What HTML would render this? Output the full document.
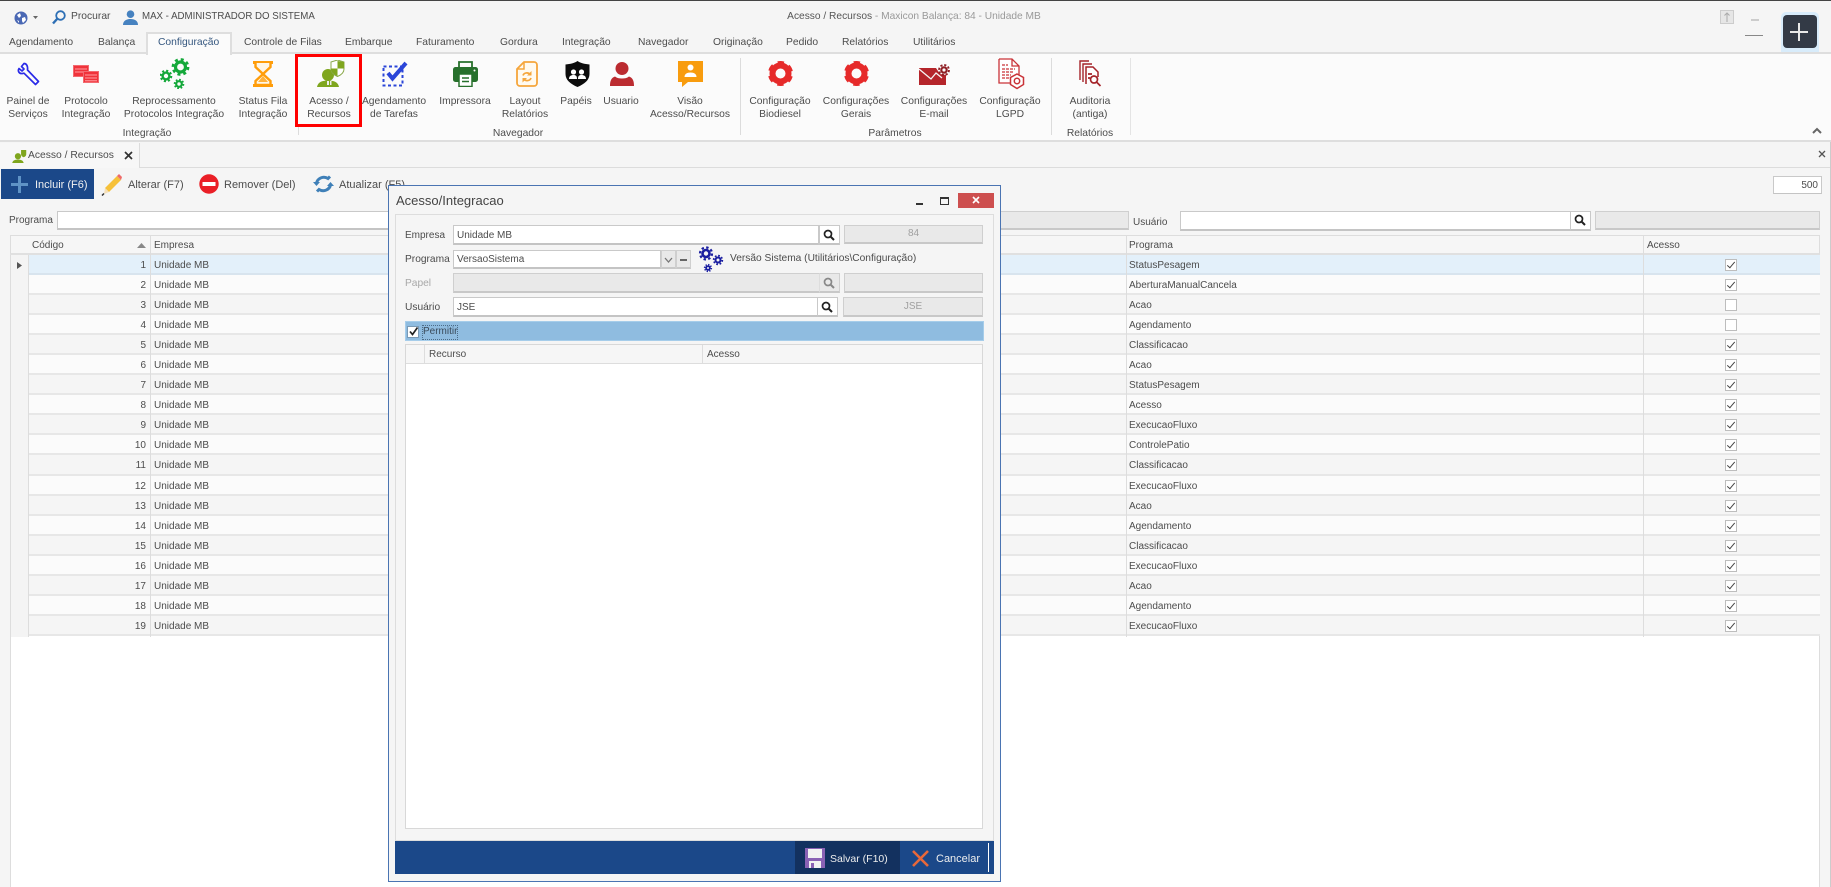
<!DOCTYPE html>
<html lang="pt-BR"><head><meta charset="utf-8"><title>Acesso / Recursos</title>
<style>
html,body{margin:0;padding:0;width:1831px;height:887px;overflow:hidden;background:#f5f5f5}
#a{position:relative;width:1831px;height:887px;overflow:hidden;background:#f5f5f5;font:10.3px/14px "Liberation Sans",sans-serif;color:#4c4c4c;filter:blur(.3px)}
.t,.c,.b,svg{position:absolute}
.t,.c{white-space:nowrap}
.c{transform:translateX(-50%);text-align:center}
.i{background:#fff;border:1px solid #c9c9c9;border-bottom:2px solid #c4c4c4;box-sizing:border-box}
.g{background:#e9e9e9;border:1px solid #cfcfcf;border-bottom:2px solid #c8c8c8;box-sizing:border-box}
.s{width:1px;background:#dcdcdc;top:58px;height:77px}
.r{position:relative;height:20.05px;box-sizing:border-box;border-bottom:2px solid #e7e7e7;background:#fbfbfb;font-size:10px;line-height:18px}
.r:nth-child(odd){background:#f5f5f5}
.r.sel{background:#e3f0fa;border-bottom-color:#d8e4ee}
.r b{position:absolute;font-weight:400;white-space:nowrap;top:2px}
.r .k{position:absolute;left:1697px;top:4px;width:12px;height:12px;box-sizing:border-box;background:#fff;border:1px solid #bdbdbd}
.r .k.on:after{content:"";position:absolute;left:3px;top:0;width:3px;height:7px;border:solid #444;border-width:0 1.6px 1.6px 0;transform:rotate(40deg)}
.r .a{left:0;width:118px;text-align:right}
.r .e{left:126px}
.r .p{left:1101px}
.l{line-height:13px;top:95px}
.h{top:239px;font-size:10px}
.d{font-size:10.2px}
</style></head><body><div id="a">

<!-- title bar -->
<div class="b" style="left:0;top:0;width:1831px;height:1px;background:#444"></div>
<svg style="left:14px;top:11px" width="14" height="14" viewBox="0 0 14 14"><circle cx="7" cy="7" r="6.5" fill="#4a68b4"/><path d="M3 4l3-2 1 3-2 2zM8 7l3-1 1 3-3 3-1-2zM3 9l2 1 0 2z" fill="#fff"/></svg>
<svg style="left:33px;top:16px" width="5" height="4" viewBox="0 0 5 4"><path d="M0 0h5L2.5 3z" fill="#666"/></svg>
<svg style="left:52px;top:10px" width="14" height="15" viewBox="0 0 14 15"><circle cx="8.5" cy="5.5" r="4.3" fill="none" stroke="#2d6fb5" stroke-width="1.8"/><path d="M5.5 8.5L1 13.5" stroke="#2d6fb5" stroke-width="2.4"/></svg>
<div class="t" style="left:71px;top:10px">Procurar</div>
<svg style="left:123px;top:10px" width="15" height="15" viewBox="0 0 15 15"><circle cx="7.5" cy="4.2" r="3.8" fill="#4682c0"/><path d="M0 15c0-4 3-6 7.5-6S15 11 15 15z" fill="#4682c0"/></svg>
<div class="t" style="left:142px;top:10px;font-size:9.7px">MAX - ADMINISTRADOR DO SISTEMA</div>
<div class="c" style="left:914px;top:10px;font-size:10.2px;color:#999"><span style="color:#555">Acesso / Recursos</span> - Maxicon Balança: 84 - Unidade MB</div>

<svg style="left:1720px;top:10px" width="14" height="14" viewBox="0 0 14 14"><rect x=".5" y=".5" width="13" height="13" fill="#e6e6e6" stroke="#ccc"/><path d="M7 12V3M4.5 5.5L7 3l2.500 2.500" stroke="#aaa" fill="none"/></svg>
<div class="b" style="left:1751px;top:19px;width:8px;height:2px;background:#ccc"></div>
<div class="b" style="left:1745px;top:35px;width:18px;height:1px;background:#888"></div>
<div class="b" style="left:1781px;top:12px;width:38px;height:45px;border-radius:5px;background:#d8ecfb"></div>
<div class="b" style="left:1783px;top:15px;width:34px;height:33px;border-radius:4px;background:#333a46"></div>
<div class="b" style="left:1790px;top:31px;width:18px;height:2px;background:#e8e8e8"></div>
<div class="b" style="left:1798px;top:23px;width:2px;height:18px;background:#e8e8e8"></div>

<!-- tabs -->
<div class="b" style="left:0;top:52px;width:1831px;height:88px;background:#fbfbfb;border-top:2px solid #dedede;box-sizing:border-box"></div>
<div class="b" style="left:146px;top:32px;width:86px;height:23px;background:#fbfbfb;border:2px solid #dedede;border-bottom:0;box-sizing:border-box"></div>
<div class="t" style="left:9px;top:36px">Agendamento</div>
<div class="t" style="left:98px;top:36px">Balança</div>
<div class="t" style="left:158px;top:36px;color:#35577f">Configuração</div>
<div class="t" style="left:244px;top:36px">Controle de Filas</div>
<div class="t" style="left:345px;top:36px">Embarque</div>
<div class="t" style="left:416px;top:36px">Faturamento</div>
<div class="t" style="left:500px;top:36px">Gordura</div>
<div class="t" style="left:562px;top:36px">Integração</div>
<div class="t" style="left:638px;top:36px">Navegador</div>
<div class="t" style="left:713px;top:36px">Originação</div>
<div class="t" style="left:786px;top:36px">Pedido</div>
<div class="t" style="left:842px;top:36px">Relatórios</div>
<div class="t" style="left:913px;top:36px">Utilitários</div>

<!-- ribbon icons -->
<svg style="left:16px;top:62px" width="24" height="24" viewBox="0 0 24 24"><path d="M8 1.500L5.500 4.500l2.500 2.500-2 2-3-2.500C1.500 9 3 12 6.500 11.500l1.500-.3L19.500 22.500l3-3L11.500 8C12 4 10.500 1.500 8 1.500z" fill="#fbfbfb" stroke="#2a2ae8" stroke-width="1.700" stroke-linejoin="round"/></svg>
<svg style="left:73px;top:65px" width="26" height="18" viewBox="0 0 26 18"><rect x=".5" y=".5" width="15" height="11" fill="#f0333b" stroke="#f26a70"/><rect x="10.500" y="6.500" width="15" height="11" fill="#f0333b" stroke="#f26a70"/><path d="M2 4h12M2 7h8M12 10h12M12 13h12M12 15.700h12" stroke="#ff9da1" stroke-width="1"/></svg>
<svg style="left:160px;top:58px" width="30" height="31" viewBox="0 0 30 31"><g fill="none" stroke="#14a83a"><circle cx="20.500" cy="9" r="5" stroke-width="3.200"/><circle cx="20.500" cy="9" r="7.600" stroke-width="2.600" stroke-dasharray="3 2.970"/><circle cx="6" cy="18" r="3.400" stroke-width="2.400"/><circle cx="6" cy="18" r="5.300" stroke-width="2" stroke-dasharray="2.100 2.060"/><circle cx="19" cy="26" r="2.800" stroke-width="2.200"/><circle cx="19" cy="26" r="4.400" stroke-width="1.800" stroke-dasharray="1.700 1.750"/></g></svg>
<svg style="left:252px;top:61px" width="22" height="26" viewBox="0 0 22 26"><path d="M1 1.500h20M1 24.500h20" stroke="#ff9d0a" stroke-width="3"/><path d="M3.500 2v4l7.500 7-7.500 7v4h15v-4L11 13l7.500-7V2" fill="#fff6e6" stroke="#ff9d0a" stroke-width="2.400"/><path d="M11 15l-5 6h10z" fill="#ffb23c"/></svg>
<svg style="left:317px;top:60px" width="28" height="27" viewBox="0 0 28 27"><circle cx="11" cy="15" r="6" fill="#7fa61e"/><path d="M0 27c1-5 5-6.500 11-6.500S21 22 22 27z" fill="#7fa61e"/><path d="M10 21h2v4h-2zM13 21h1.500v4H13z" fill="#eee"/><path d="M14 2l6.500-2L27 2v7c0 3.500-3 6-6.500 7.500C17 15 14 12.500 14 9z" fill="#fff" stroke="#8aa94a" stroke-width="1"/><path d="M20.500 1v7.500H14v.5c0 3 3 5.500 6.500 7V8.500H27V2z" fill="#7fa61e"/></svg>
<svg style="left:382px;top:61px" width="26" height="26" viewBox="0 0 26 26"><rect x="1.500" y="5.500" width="19" height="19" fill="none" stroke="#2b46d8" stroke-width="2" stroke-dasharray="3 2.500"/><path d="M6 12l4.500 5.500L24 2" fill="none" stroke="#2b46d8" stroke-width="4"/></svg>
<svg style="left:453px;top:61px" width="25" height="26" viewBox="0 0 25 26"><path d="M6 6V1h13v5" fill="none" stroke="#27702c" stroke-width="1.800"/><rect x="0" y="6" width="25" height="15" rx="2.500" fill="#27702c"/><rect x="6" y="13" width="13" height="12.500" fill="#fff" stroke="#27702c" stroke-width="1.500"/><path d="M9 17h7M9 20.500h7" stroke="#27702c" stroke-width="1.500"/><circle cx="21.500" cy="9.500" r="1" fill="#fff"/></svg>
<svg style="left:516px;top:61px" width="22" height="26" viewBox="0 0 22 26"><path d="M8 1H18c1.700 0 3 1.300 3 3v18c0 1.700-1.300 3-3 3H4c-1.700 0-3-1.300-3-3V8z" fill="#fffaf0" stroke="#f5a63c" stroke-width="1.800" stroke-linejoin="round"/><path d="M8 1v7H1" fill="none" stroke="#f5a63c" stroke-width="1.500"/><path d="M7 14.500c1-3 5-3.500 7.500-1M15 17c-1 3-5 3.500-7.500 1" fill="none" stroke="#f5a63c" stroke-width="1.700"/><path d="M15.500 10v4.500H11zM6.500 21.500V17H11z" fill="#f5a63c"/></svg>
<svg style="left:565px;top:61px" width="25" height="26" viewBox="0 0 25 26"><path d="M12.500 0c3 2 7 3 12 3.500V13c0 6-5 10-12 13C5.500 23 .5 19 .5 13V3.500C5.500 3 9.500 2 12.500 0z" fill="#0c0c0c"/><circle cx="8.500" cy="11" r="2.600" fill="#fff"/><circle cx="16.500" cy="11" r="2.600" fill="#fff"/><path d="M4 18c0-3 2-4 4.500-4s3.500 1 3.500 4zM13 18c0-3 1-4 3.500-4s4.500 1 4.500 4z" fill="#fff"/></svg>
<svg style="left:610px;top:62px" width="24" height="24" viewBox="0 0 24 24"><circle cx="12" cy="6.500" r="6.500" fill="#bb2b30"/><path d="M0 24c0-5 1-8 5-9.500 2 1.500 4 2 7 2s5-.5 7-2c4 1.500 5 4.500 5 9.500z" fill="#bb2b30"/></svg>
<svg style="left:678px;top:61px" width="25" height="26" viewBox="0 0 25 26"><path d="M0 0h25v21H10l-6 5v-5H0z" fill="#f89c0e"/><circle cx="12.500" cy="6.500" r="3" fill="#fff"/><path d="M6.500 16c0-3 2.500-4.500 6-4.500s6 1.500 6 4.500z" fill="#fff"/></svg>
<svg style="left:768px;top:61px" width="25" height="25" viewBox="0 0 25 25"><g fill="none" stroke="#e62a2a"><circle cx="12.500" cy="12.500" r="8" stroke-width="6"/><circle cx="12.500" cy="12.500" r="10.500" stroke-width="4" stroke-dasharray="6 5" transform="rotate(13.6 12.500 12.500)"/></g></svg>
<svg style="left:844px;top:61px" width="25" height="25" viewBox="0 0 25 25"><g fill="none" stroke="#e62a2a"><circle cx="12.500" cy="12.500" r="8" stroke-width="6"/><circle cx="12.500" cy="12.500" r="10.500" stroke-width="4" stroke-dasharray="6 5" transform="rotate(13.6 12.500 12.500)"/></g></svg>
<svg style="left:919px;top:64px" width="32" height="21" viewBox="0 0 32 21"><path d="M0 4h17l4 6 6 1v10H0z" fill="#b5252b"/><path d="M0 5l12 10 5-6 6 5" fill="none" stroke="#f5f5f5" stroke-width="1.300"/><g fill="none" stroke="#8f1f24"><circle cx="25" cy="6" r="2.700" stroke-width="2.200"/><circle cx="25" cy="6" r="5" stroke-width="1.800" stroke-dasharray="2.200 1.730"/></g></svg>
<svg style="left:998px;top:58px" width="27" height="32" viewBox="0 0 27 32"><path d="M1 1h13l7 7v14M14 1v7h7M14 25H1V1" fill="#fff" stroke="#c93338" stroke-width="1.300"/><path d="M4 7h6M4 11h13M4 14h11M4 17h9M4 20h7" stroke="#c93338" stroke-width="1.300" stroke-dasharray="3 1"/><path d="M19 16l6.500 3.500v7L19 30.500l-6.500-4v-7z" fill="#fff" stroke="#c93338" stroke-width="1.500"/><circle cx="19" cy="23" r="2.700" fill="none" stroke="#c93338" stroke-width="1.500"/></svg>
<svg style="left:1079px;top:60px" width="23" height="27" viewBox="0 0 23 27"><path d="M1 20V1h9M4 22V4h9" fill="none" stroke="#a5242a" stroke-width="1.400"/><path d="M7 24V7h7l5 5v5" fill="#fff" stroke="#a5242a" stroke-width="1.500"/><circle cx="15" cy="19.500" r="3.500" fill="#fff" stroke="#a5242a" stroke-width="1.700"/><path d="M17.500 22l4 4M9 14h4M9 18h2" stroke="#a5242a" stroke-width="1.700"/></svg>

<!-- ribbon labels -->
<div class="c l" style="left:28px">Painel de<br>Serviços</div>
<div class="c l" style="left:86px">Protocolo<br>Integração</div>
<div class="c l" style="left:174px">Reprocessamento<br>Protocolos Integração</div>
<div class="c l" style="left:263px">Status Fila<br>Integração</div>
<div class="c l" style="left:329px">Acesso /<br>Recursos</div>
<div class="c l" style="left:394px">Agendamento<br>de Tarefas</div>
<div class="c l" style="left:465px">Impressora</div>
<div class="c l" style="left:525px">Layout<br>Relatórios</div>
<div class="c l" style="left:576px">Papéis</div>
<div class="c l" style="left:621px">Usuario</div>
<div class="c l" style="left:690px">Visão<br>Acesso/Recursos</div>
<div class="c l" style="left:780px">Configuração<br>Biodiesel</div>
<div class="c l" style="left:856px">Configurações<br>Gerais</div>
<div class="c l" style="left:934px">Configurações<br>E-mail</div>
<div class="c l" style="left:1010px">Configuração<br>LGPD</div>
<div class="c l" style="left:1090px">Auditoria<br>(antiga)</div>
<div class="c" style="left:147px;top:127px">Integração</div>
<div class="c" style="left:518px;top:127px">Navegador</div>
<div class="c" style="left:895px;top:127px">Parâmetros</div>
<div class="c" style="left:1090px;top:127px">Relatórios</div>
<div class="b s" style="left:298px;top:127px;height:8px"></div>
<div class="b s" style="left:740px"></div>
<div class="b s" style="left:1051px"></div>
<div class="b s" style="left:1130px;background:#e4e4e4"></div>
<div class="b" style="left:295px;top:54px;width:67px;height:73px;border:3px solid #f00;box-sizing:border-box"></div>
<svg style="left:1812px;top:127px" width="10" height="7" viewBox="0 0 10 7"><path d="M1 6l4-4 4 4" fill="none" stroke="#666" stroke-width="2"/></svg>
<div class="b" style="left:0;top:140px;width:1831px;height:2px;background:#dedede"></div>

<!-- document tab -->
<div class="b" style="left:0;top:167px;width:1831px;height:1px;background:#dcdcdc"></div>
<div class="b" style="left:0;top:143px;width:140px;height:25px;background:#f7f7f7;border-right:1px solid #dcdcdc;box-sizing:border-box"></div>
<svg style="left:11px;top:149px" width="17" height="14" viewBox="0 0 28 27"><circle cx="11" cy="14" r="6" fill="#7fa61e"/><path d="M0 27c1-5 5-6.500 11-6.500S21 22 22 27z" fill="#7fa61e"/><path d="M17 2h10v8c0 3-2 5-5 6-3-1-5-3-5-6z" fill="#7fa61e"/></svg>
<div class="t" style="left:28px;top:149px;font-size:10.3px">Acesso / Recursos</div>
<svg style="left:124px;top:151px" width="9" height="9" viewBox="0 0 9 9"><path d="M1 1l7 7M8 1L1 8" stroke="#333" stroke-width="1.700"/></svg>
<svg style="left:1818px;top:150px" width="8" height="8" viewBox="0 0 8 8"><path d="M1 1l6 6M7 1L1 7" stroke="#555" stroke-width="1.300"/></svg>

<!-- toolbar -->
<div class="b" style="left:1px;top:169px;width:93px;height:30px;background:#1b4889"></div>
<div class="b" style="left:11px;top:183px;width:17px;height:3px;background:#5f93c6"></div>
<div class="b" style="left:18px;top:176px;width:3px;height:17px;background:#5f93c6"></div>
<div class="t" style="left:35px;top:178px;font-size:11px;color:#f0f0f0">Incluir (F6)</div>
<svg style="left:101px;top:173px" width="22" height="23" viewBox="0 0 22 23"><path d="M4 15L16 3l4 4L8 19z" fill="#f6c13a"/><path d="M16 3l2-2 3 3-1 3z" fill="#ef6a6a"/><path d="M4 15l4 4-5 2z" fill="#f5dfb8"/><path d="M1 22.500l2-2" stroke="#333" stroke-width="1.500"/></svg>
<div class="t" style="left:128px;top:178px;font-size:11px">Alterar (F7)</div>
<svg style="left:199px;top:174px" width="20" height="20" viewBox="0 0 20 20"><circle cx="10" cy="10" r="9.700" fill="#ea1f27"/><rect x="3.500" y="8" width="13" height="4" fill="#fff"/></svg>
<div class="t" style="left:224px;top:178px;font-size:11px">Remover (Del)</div>
<svg style="left:313px;top:174px" width="21" height="20" viewBox="0 0 21 20"><path d="M3.500 9C4.500 4.500 10 1.500 15 4.500l2-2" fill="none" stroke="#3f80b8" stroke-width="3"/><path d="M17.500 11c-1 4.500-6.500 7.500-11.500 4.500l-2 2" fill="none" stroke="#3f80b8" stroke-width="3"/><path d="M0 8h7l-3.500 4zM21 12h-7l3.500-4z" fill="#3f80b8"/></svg>
<div class="t" style="left:339px;top:178px;font-size:11px">Atualizar (F5)</div>
<div class="b i" style="left:1773px;top:176px;width:49px;height:18px;font-size:10px;line-height:17px;text-align:right;padding-right:3px;border-bottom-width:1px">500</div>

<!-- filter row -->
<div class="t" style="left:9px;top:214px;font-size:10px">Programa</div>
<div class="b i" style="left:57px;top:211px;width:340px;height:19px"></div>
<div class="b g" style="left:1000px;top:211px;width:129px;height:19px;border-left:0"></div>
<div class="t" style="left:1133px;top:216px;font-size:10px">Usuário</div>
<div class="b i" style="left:1180px;top:211px;width:391px;height:20px"></div>
<div class="b i" style="left:1570px;top:211px;width:21px;height:20px"></div>
<svg style="left:1574px;top:214px" width="12" height="12" viewBox="0 0 12 12"><circle cx="5" cy="5" r="3.500" fill="none" stroke="#222" stroke-width="1.700"/><path d="M7.500 7.500L11 11" stroke="#222" stroke-width="2"/></svg>
<div class="b g" style="left:1595px;top:211px;width:225px;height:19px"></div>

<!-- main grid -->
<div class="b" style="left:10px;top:235px;width:1810px;height:652px;background:#fff;border-left:1px solid #ddd;border-right:1px solid #ddd;box-sizing:border-box"></div>
<div class="b" style="left:1830px;top:142px;width:1px;height:745px;background:#ccc"></div>
<div class="b" style="left:10px;top:235px;width:1810px;height:20px;background:#f6f6f6;border:1px solid #ddd;border-bottom:2px solid #e0e0e0;box-sizing:border-box"></div>
<div class="b" style="left:10px;top:255px;width:18px;height:382px;background:#f4f4f4;border-left:1px solid #ddd;box-sizing:border-box"></div>
<div class="t h" style="left:32px">Código</div>
<svg style="left:137px;top:243px" width="9" height="5" viewBox="0 0 9 5"><path d="M0 5h9L4.500 0z" fill="#888"/></svg>
<div class="t h" style="left:154px">Empresa</div>
<div class="t h" style="left:1129px">Programa</div>
<div class="t h" style="left:1647px">Acesso</div>
<svg style="left:17px;top:262px" width="5" height="7" viewBox="0 0 5 7"><path d="M0 0l5 3.500L0 7z" fill="#555"/></svg>

<div class="b" style="left:28px;top:255px;width:1792px">
<div class="r sel"><b class="a">1</b><b class="e">Unidade MB</b><b class="p">StatusPesagem</b><i class="k on"></i></div>
<div class="r"><b class="a">2</b><b class="e">Unidade MB</b><b class="p">AberturaManualCancela</b><i class="k on"></i></div>
<div class="r"><b class="a">3</b><b class="e">Unidade MB</b><b class="p">Acao</b><i class="k"></i></div>
<div class="r"><b class="a">4</b><b class="e">Unidade MB</b><b class="p">Agendamento</b><i class="k"></i></div>
<div class="r"><b class="a">5</b><b class="e">Unidade MB</b><b class="p">Classificacao</b><i class="k on"></i></div>
<div class="r"><b class="a">6</b><b class="e">Unidade MB</b><b class="p">Acao</b><i class="k on"></i></div>
<div class="r"><b class="a">7</b><b class="e">Unidade MB</b><b class="p">StatusPesagem</b><i class="k on"></i></div>
<div class="r"><b class="a">8</b><b class="e">Unidade MB</b><b class="p">Acesso</b><i class="k on"></i></div>
<div class="r"><b class="a">9</b><b class="e">Unidade MB</b><b class="p">ExecucaoFluxo</b><i class="k on"></i></div>
<div class="r"><b class="a">10</b><b class="e">Unidade MB</b><b class="p">ControlePatio</b><i class="k on"></i></div>
<div class="r"><b class="a">11</b><b class="e">Unidade MB</b><b class="p">Classificacao</b><i class="k on"></i></div>
<div class="r"><b class="a">12</b><b class="e">Unidade MB</b><b class="p">ExecucaoFluxo</b><i class="k on"></i></div>
<div class="r"><b class="a">13</b><b class="e">Unidade MB</b><b class="p">Acao</b><i class="k on"></i></div>
<div class="r"><b class="a">14</b><b class="e">Unidade MB</b><b class="p">Agendamento</b><i class="k on"></i></div>
<div class="r"><b class="a">15</b><b class="e">Unidade MB</b><b class="p">Classificacao</b><i class="k on"></i></div>
<div class="r"><b class="a">16</b><b class="e">Unidade MB</b><b class="p">ExecucaoFluxo</b><i class="k on"></i></div>
<div class="r"><b class="a">17</b><b class="e">Unidade MB</b><b class="p">Acao</b><i class="k on"></i></div>
<div class="r"><b class="a">18</b><b class="e">Unidade MB</b><b class="p">Agendamento</b><i class="k on"></i></div>
<div class="r"><b class="a">19</b><b class="e">Unidade MB</b><b class="p">ExecucaoFluxo</b><i class="k on"></i></div>
</div>
<div class="b" style="left:28px;top:255px;width:1px;height:382px;background:#ddd"></div>
<div class="b" style="left:150px;top:235px;width:1px;height:402px;background:#ddd"></div>
<div class="b" style="left:1126px;top:235px;width:1px;height:402px;background:#ddd"></div>
<div class="b" style="left:1643px;top:235px;width:1px;height:402px;background:#ddd"></div>

<!-- dialog -->
<div class="b" style="left:388px;top:185px;width:613px;height:697px;background:#f5f5f5;border:1px solid #4a74b2;box-sizing:border-box"></div>
<div class="t" style="left:396px;top:193px;font-size:13px;line-height:16px;color:#444">Acesso/Integracao</div>
<div class="b" style="left:916px;top:203px;width:7px;height:2px;background:#333"></div>
<div class="b" style="left:940px;top:197px;width:9px;height:8px;border:1px solid #333;border-top-width:2px;box-sizing:border-box"></div>
<div class="b" style="left:958px;top:193px;width:36px;height:15px;background:#cd4f4f"></div>
<svg style="left:972px;top:196px" width="8" height="8" viewBox="0 0 8 8"><path d="M1 1l6 6M7 1L1 7" stroke="#fff" stroke-width="1.600"/></svg>
<div class="b" style="left:395px;top:214px;width:599px;height:627px;border:1px solid #ddd;box-sizing:border-box"></div>

<div class="t d" style="left:405px;top:229px;font-size:10px">Empresa</div>
<div class="b i" style="left:453px;top:225px;width:366px;height:20px"></div>
<div class="t" style="left:457px;top:229px;font-size:10px">Unidade MB</div>
<div class="b i" style="left:819px;top:225px;width:21px;height:20px"></div>
<svg style="left:823px;top:229px" width="12" height="12" viewBox="0 0 12 12"><circle cx="5" cy="5" r="3.500" fill="none" stroke="#222" stroke-width="1.700"/><path d="M7.500 7.500L11 11" stroke="#222" stroke-width="2"/></svg>
<div class="b g" style="left:844px;top:225px;width:139px;height:19px;text-align:center;line-height:16px;color:#a0a0a0;font-size:10px">84</div>

<div class="t d" style="left:405px;top:253px">Programa</div>
<div class="b i" style="left:453px;top:250px;width:208px;height:19px"></div>
<div class="t" style="left:457px;top:253px;font-size:10px">VersaoSistema</div>
<div class="b g" style="left:661px;top:250px;width:15px;height:19px"></div>
<div class="b g" style="left:676px;top:250px;width:15px;height:19px"></div>
<svg style="left:664px;top:257px" width="9" height="6" viewBox="0 0 9 6"><path d="M1 1l3.500 4L8 1" fill="none" stroke="#777" stroke-width="1.300"/></svg>
<div class="b" style="left:680px;top:259px;width:7px;height:1.500px;background:#666"></div>
<svg style="left:698px;top:246px" width="26" height="27" viewBox="0 0 26 27"><g fill="none" stroke="#1a1ea0"><circle cx="8" cy="7.500" r="3.500" stroke-width="2.600"/><circle cx="8" cy="7.500" r="6" stroke-width="2.200" stroke-dasharray="2.400 2.310"/><circle cx="20" cy="14" r="2.500" stroke-width="2"/><circle cx="20" cy="14" r="4.300" stroke-width="1.800" stroke-dasharray="1.700 1.680"/><circle cx="10" cy="22" r="1.900" stroke-width="1.800"/><circle cx="10" cy="22" r="3.400" stroke-width="1.500" stroke-dasharray="1.300 1.370"/></g></svg>
<div class="t" style="left:730px;top:252px;font-size:10.2px">Versão Sistema (Utilitários\Configuração)</div>

<div class="t d" style="left:405px;top:277px;color:#a8a8a8">Papel</div>
<div class="b g" style="left:453px;top:273px;width:367px;height:20px"></div>
<div class="b g" style="left:819px;top:273px;width:21px;height:20px;border-left-color:#ddd"></div>
<svg style="left:823px;top:277px" width="12" height="12" viewBox="0 0 12 12"><circle cx="5" cy="5" r="3.500" fill="none" stroke="#888" stroke-width="1.700"/><path d="M7.500 7.500L11 11" stroke="#888" stroke-width="2"/></svg>
<div class="b g" style="left:844px;top:273px;width:139px;height:20px"></div>

<div class="t d" style="left:405px;top:301px">Usuário</div>
<div class="b i" style="left:453px;top:297px;width:365px;height:20px"></div>
<div class="t" style="left:457px;top:301px;font-size:10px">JSE</div>
<div class="b i" style="left:817px;top:297px;width:21px;height:20px"></div>
<svg style="left:821px;top:301px" width="12" height="12" viewBox="0 0 12 12"><circle cx="5" cy="5" r="3.500" fill="none" stroke="#222" stroke-width="1.700"/><path d="M7.500 7.500L11 11" stroke="#222" stroke-width="2"/></svg>
<div class="b g" style="left:843px;top:297px;width:140px;height:20px;text-align:center;line-height:18px;color:#a0a0a0;font-size:10px">JSE</div>

<div class="b" style="left:405px;top:321px;width:579px;height:20px;background:#8fbce0;border:1px solid #a6cdea;box-sizing:border-box"></div>
<div class="b" style="left:407px;top:326px;width:12px;height:12px;background:#fff;border:1px solid #7a9ab5;box-sizing:border-box"></div>
<svg style="left:408px;top:326px" width="11" height="11" viewBox="0 0 11 11"><path d="M2 5.500l2.500 3L9.500 1.500" fill="none" stroke="#222" stroke-width="1.700"/></svg>
<div class="t" style="left:422px;top:325px;height:15px;font-size:10px;padding:0 1px;outline:1px dotted #4c6c88;outline-offset:-1px;color:#3a4a5a">Permitir</div>

<div class="b" style="left:405px;top:344px;width:578px;height:485px;background:#fff;border:1px solid #d8d8d8;box-sizing:border-box"></div>
<div class="b" style="left:406px;top:345px;width:576px;height:18px;background:#f6f6f6;border-bottom:1px solid #ddd"></div>
<div class="b" style="left:424px;top:345px;width:1px;height:18px;background:#ddd"></div>
<div class="b" style="left:702px;top:345px;width:1px;height:18px;background:#ddd"></div>
<div class="t" style="left:429px;top:348px;font-size:10px">Recurso</div>
<div class="t" style="left:707px;top:348px;font-size:10px">Acesso</div>

<div class="b" style="left:395px;top:841px;width:599px;height:33px;background:#1b4889"></div>
<div class="b" style="left:795px;top:841px;width:105px;height:33px;background:#13315f"></div>
<svg style="left:805px;top:848px" width="20" height="20" viewBox="0 0 20 20"><path d="M0 0h20v20H0z" fill="#8a62b4"/><rect x="3" y="1" width="14" height="9" fill="#f2f2f2"/><rect x="4" y="13" width="12" height="7" fill="#f2f2f2"/><rect x="6" y="15" width="3" height="5" fill="#8a62b4"/></svg>
<div class="t" style="left:830px;top:852px;font-size:10.5px;color:#eee">Salvar (F10)</div>
<svg style="left:912px;top:850px" width="17" height="17" viewBox="0 0 17 17"><path d="M1 1l15 15M16 1L1 16" stroke="#e8683a" stroke-width="2.600"/></svg>
<div class="t" style="left:936px;top:852px;font-size:11px;color:#eee">Cancelar</div>
<div class="b" style="left:988px;top:843px;width:1px;height:29px;background:#fff"></div>

</div></body></html>
